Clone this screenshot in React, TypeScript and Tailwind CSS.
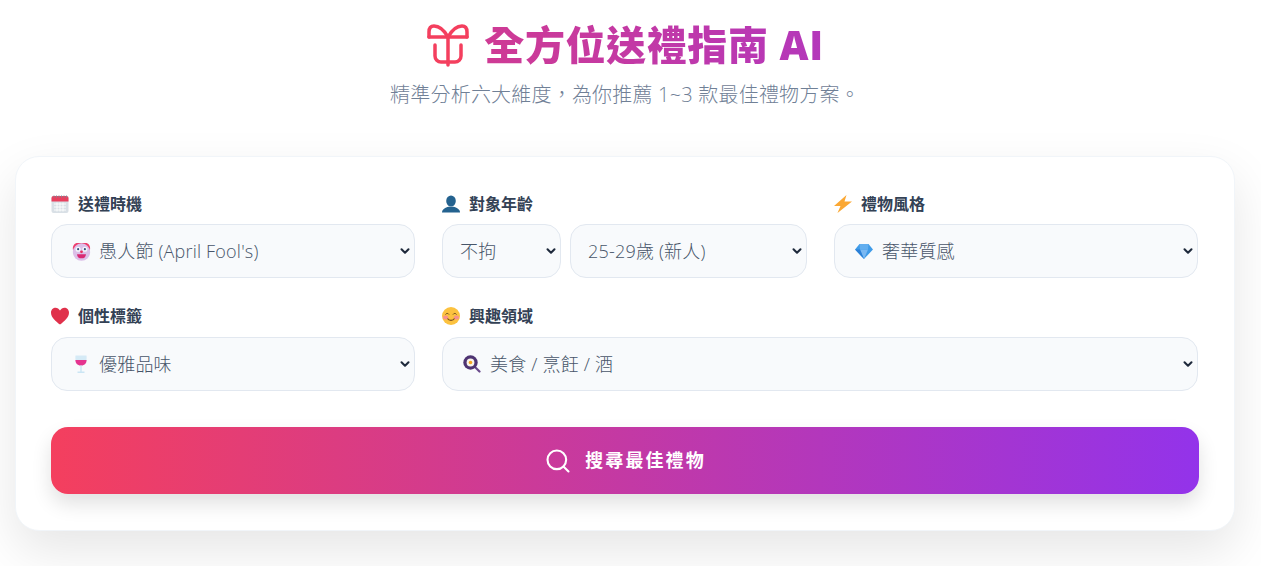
import { ChevronDown, Search } from "lucide-react";
import type { ReactNode } from "react";

const CalendarEmoji = () => (
  <svg viewBox="0 0 18 18" className="h-[18px] w-[18px]">
    <rect x="0.500" y="1" width="17" height="17" rx="2" fill="#d9e0e6" />
    <path d="M.5 6.500V3a2 2 0 0 1 2-2h13a2 2 0 0 1 2 2v3.500z" fill="#e8405e" />
    <path d="M3 .5v2M5.500 .5v2M8 .5v2M10.500 .5v2M13 .5v2M15.500 .5v2" stroke="#7d8a96" strokeWidth="1" />
    <path d="M3 9h12M3 12h12M3 15h12M6 7.500v9M9 7.500v9M12 7.500v9" stroke="#fff" strokeWidth="0.9" />
  </svg>
);

const PersonEmoji = () => (
  <svg viewBox="0 0 18 18" className="h-[18px] w-[18px]">
    <ellipse cx="9" cy="6" rx="4.800" ry="5.500" fill="#24628f" />
    <path d="M0 17.500c0-3.500 3.500-5 6.500-5.800h5c3 .8 6.500 2.300 6.500 5.800z" fill="#24628f" />
  </svg>
);

const BoltEmoji = () => (
  <svg viewBox="0 0 18 18" className="h-[18px] w-[18px]">
    <path d="M12.500 0 0 11h6.500L3.500 18 18 6.500h-7.500z" fill="#fba834" />
  </svg>
);

const HeartEmoji = () => (
  <svg viewBox="0 0 18 18" className="h-[18px] w-[18px]">
    <path d="M9 17.500C5 14.500 0 10.500 0 5.700 0 2.800 2.200.8 4.600.8 6.400.8 8 1.900 9 3.600 10 1.900 11.600.8 13.400.8 15.800.8 18 2.800 18 5.700 18 10.500 13 14.500 9 17.500z" fill="#e0314b" />
  </svg>
);

const SmileEmoji = () => (
  <svg viewBox="0 0 18 18" className="h-[18px] w-[18px]">
    <circle cx="9" cy="9" r="9" fill="#fcc23f" />
    <ellipse cx="3.600" cy="10.500" rx="2.600" ry="1.900" fill="#f78f8f" />
    <ellipse cx="14.400" cy="10.500" rx="2.600" ry="1.900" fill="#f78f8f" />
    <path d="M3.500 7.500c.8-1.400 2.700-1.400 3.500 0M11 7.500c.8-1.400 2.700-1.400 3.500 0" stroke="#6b4a1e" strokeWidth="1" fill="none" />
    <path d="M5.500 11.500c1.500 2.400 5.500 2.400 7 0" stroke="#7b4a1e" strokeWidth="1.200" fill="none" />
  </svg>
);

const ClownEmoji = () => (
  <svg viewBox="0 0 18 18" className="h-[19px] w-[19px]">
    <path d="M1 8C0 3 3 .5 6 1h6c3-.5 6 2 5 7z" fill="#ee3f6d" />
    <circle cx="9" cy="9.500" r="8.200" fill="#dcbfe8" />
    <circle cx="5.800" cy="6.800" r="2.400" fill="#f4f6fb" />
    <circle cx="12.200" cy="6.800" r="2.400" fill="#f4f6fb" />
    <circle cx="5.800" cy="6.800" r="1" fill="#35517a" />
    <circle cx="12.200" cy="6.800" r="1" fill="#35517a" />
    <circle cx="9" cy="9.300" r="1.300" fill="#e8305f" />
    <path d="M4.800 11.500h8.400c0 2.600-1.800 4-4.200 4s-4.200-1.400-4.200-4z" fill="#d92a74" />
  </svg>
);

const WineEmoji = () => (
  <svg viewBox="0 0 18 18" className="h-[18px] w-[18px]">
    <path d="M3.500 .5h11c.6 5-.6 10-5.500 10S2.900 5.500 3.500 .5z" fill="#d5eaf6" />
    <path d="M3.400 5h11.200c-.1 3-1.700 5.500-5.600 5.500S3.500 8 3.400 5z" fill="#e5348f" />
    <path d="M9 10.500v6.500M5.500 17.300h7" stroke="#cbe5f4" strokeWidth="1.400" />
  </svg>
);

const DiamondEmoji = () => (
  <svg viewBox="0 0 18 18" className="h-[18px] w-[18px]">
    <path d="M4.500 2h9L18 7.500 9 17 0 7.500z" fill="#3f9be8" />
    <path d="M5 7.500h8L9 17z" fill="#7ab8f2" />
    <path d="M4.500 2 5 7.500h8L13.500 2z" fill="#62aeef" />
    <path d="M0 7.500h5L9 17z" fill="#2b7fd6" />
  </svg>
);

const PanEmoji = () => (
  <svg viewBox="0 0 18 18" className="h-[18px] w-[18px]">
    <path d="M12 12l4.500 4.500" stroke="#6a4a8c" strokeWidth="2.200" strokeLinecap="round" />
    <circle cx="7.500" cy="7.500" r="7.200" fill="#4e3472" />
    <circle cx="7.500" cy="7.500" r="3.900" fill="#f8f3ea" />
    <circle cx="7.500" cy="7.500" r="1.800" fill="#f5a623" />
  </svg>
);

const cjk = "font-['Segoe_UI','Open_Sans','Noto_Sans_CJK_TC',sans-serif]";

function Field({
  emoji,
  label,
  children,
  className = "",
}: {
  emoji: ReactNode;
  label: string;
  children: ReactNode;
  className?: string;
}) {
  return (
    <div className={className}>
      <label className="mb-[8px] flex h-[24px] items-center gap-[9px] text-[16px] font-semibold text-[#334155]">
        {emoji}
        <span>{label}</span>
      </label>
      {children}
    </div>
  );
}

function Select({
  value,
  emoji,
  className = "",
}: {
  value: string;
  emoji?: ReactNode;
  className?: string;
}) {
  return (
    <div className={`relative h-[54px] ${className}`}>
      <select
        defaultValue={value}
        className={`h-full w-full appearance-none rounded-[16px] border border-[#e2e8f0] bg-[#f8fafc] pr-8 text-[18px] font-light tracking-[0.2px] text-[#475569] outline-none ${
          emoji ? "pl-[47px]" : "pl-[17px]"
        }`}
      >
        <option>{value}</option>
      </select>
      {emoji && (
        <span className="pointer-events-none absolute left-[21px] top-[18px]">{emoji}</span>
      )}
      <ChevronDown
        size={14}
        strokeWidth={3.500}
        className="pointer-events-none absolute right-[3px] top-[20px] text-[#1e293b]"
      />
    </div>
  );
}

export default function App() {
  return (
    <div lang="zh-TW" className={`h-[566px] overflow-hidden bg-white pl-[15px] pr-[26px] ${cjk}`}>
      {/* header */}
      <header className="pt-[18px] text-center">
        <h1 className="flex items-center justify-center gap-[16px] bg-[linear-gradient(to_right,#f43f5e,#9333ea)] bg-clip-text text-[40px] font-black leading-[54px] tracking-[0.6px] text-transparent">
          <svg
            viewBox="-1 0 42 42"
            className="h-[42px] w-[42px] overflow-visible text-[#f43f5e]"
            fill="none"
            stroke="currentColor"
            strokeWidth="3.500"
            strokeLinecap="round"
            strokeLinejoin="round"
          >
            <path d="M2 13h38M21 13v28M8 21v11a6 6 0 0 0 6 6h14a6 6 0 0 0 6-6V21" />
            <path d="M21 13C17 6 12 2 7 2 3 2 2 5 2 8v5M21 13C25 6 30 2 35 2c4 0 5 3 5 6v5" />
          </svg>
          <span>全方位送禮指南 AI</span>
        </h1>
        <p className="mt-[9px] text-[20px] font-light leading-[28px] tracking-[0.2px] text-[#708096]">
          精準分析六大維度，為你推薦 1~3 款最佳禮物方案。
        </p>
      </header>

      {/* form card */}
      <main className="mt-[47px] rounded-[24px] border border-[#f1f5f9] bg-white px-[35px] pb-[36px] pt-[35px] shadow-[0_20px_50px_rgba(0,0,0,0.1)]">
        <div className="grid grid-cols-[364px_365px_364px] gap-x-[27px] gap-y-[26px]">
          <Field emoji={<CalendarEmoji />} label="送禮時機">
            <Select value="愚人節 (April Fool's)" emoji={<ClownEmoji />} />
          </Field>
          <Field emoji={<PersonEmoji />} label="對象年齡">
            <div className="flex gap-[9px]">
              <Select value="不拘" className="w-[119px] shrink-0" />
              <Select value="25-29歲 (新人)" className="flex-1" />
            </div>
          </Field>
          <Field emoji={<BoltEmoji />} label="禮物風格">
            <Select value="奢華質感" emoji={<DiamondEmoji />} />
          </Field>
          <Field emoji={<HeartEmoji />} label="個性標籤" className="[&>label]:mb-[9px]">
            <Select value="優雅品味" emoji={<WineEmoji />} />
          </Field>
          <Field emoji={<SmileEmoji />} label="興趣領域" className="col-span-2 [&>label]:mb-[9px]">
            <Select value="美食 / 烹飪 / 酒" emoji={<PanEmoji />} />
          </Field>
        </div>
        <button className="mt-[36px] flex h-[67px] w-full items-center justify-center gap-[13px] rounded-[17px] bg-[linear-gradient(to_right,#f43f5e,#9333ea)] text-[18px] font-bold tracking-[2.100px] text-white shadow-[0_10px_20px_rgba(0,0,0,0.12)]">
          <Search size={28} strokeWidth={1.800} />
          搜尋最佳禮物
        </button>
      </main>
    </div>
  );
}
